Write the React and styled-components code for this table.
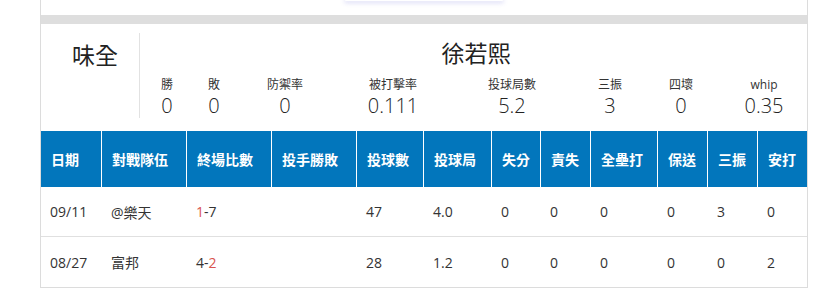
import React from "react";
import styled, { createGlobalStyle } from "styled-components";

const Global = createGlobalStyle`
  html, body { margin: 0; padding: 0; background: #fff; }
  body { font-family: "Open Sans", "Noto Sans CJK TC", sans-serif; color: #333; }
`;

const Page = styled.div`
  padding-left: 40px;
`;

const Card = styled.div`
  width: 768px;
  box-sizing: border-box;
  border-left: 1px solid #dcdcdc;
  border-right: 1px solid #dcdcdc;
  border-bottom: 1px solid #dcdcdc;
  background: #fff;
`;

const TopArea = styled.div`
  height: 15px;
  display: flex;
  justify-content: center;
`;

const FloatingTab = styled.div`
  width: 158px;
  height: 1px;
  background: #fff;
  border-radius: 0 0 8px 8px;
  box-shadow: 0 1px 4px 1px rgba(120, 120, 220, 0.28);
`;

const GrayBar = styled.div`
  height: 9px;
  background: #dedede;
`;

const Header = styled.div`
  display: flex;
  padding: 9px 0 13px;
`;

const TeamBox = styled.div`
  flex: 0 0 99px;
  height: 85px;
  box-sizing: border-box;
  border-right: 1px solid #e2e2e2;
  padding: 6px 0 0 31px;
  font-family: "Noto Sans CJK TC", sans-serif;
  font-size: 23px;
  line-height: 30px;
  color: #222;
`;

const PlayerBox = styled.div`
  flex: 1;
  min-width: 0;
  display: flex;
  flex-direction: column;
`;

const PlayerName = styled.div`
  margin-top: 4px;
  padding-left: 5px;
  text-align: center;
  font-family: "Noto Sans CJK TC", sans-serif;
  font-size: 23px;
  line-height: 30px;
  color: #222;
`;

const StatGrid = styled.div`
  display: grid;
  grid-template-columns: 54px 40px 102px 114px 124px 72px 70px 96px;
  margin-top: 10px;
`;

const Stat = styled.div`
  display: flex;
  flex-direction: column;
  align-items: center;
  white-space: nowrap;
`;

const StatLabel = styled.div`
  font-family: "Open Sans", "Noto Sans CJK TC", sans-serif;
  font-size: 12px;
  line-height: 16px;
  color: #333;
`;

const StatValue = styled.div`
  font-family: "Open Sans", sans-serif;
  font-weight: 300;
  font-size: 20px;
  line-height: 24px;
  margin-top: 1px;
  color: #222;
`;

const Table = styled.table`
  width: 766px;
  table-layout: fixed;
  border-collapse: separate;
  border-spacing: 0;
`;

const Th = styled.th`
  height: 56px;
  box-sizing: border-box;
  background: #0276bc;
  color: #fff;
  font-family: "Noto Sans CJK TC", sans-serif;
  font-weight: 700;
  font-size: 14px;
  text-align: left;
  padding: 0 0 0 10px;
  border-left: ${(p) => (p.$first ? "none" : "1px solid #fff")};
`;

const Td = styled.td`
  height: 50px;
  box-sizing: border-box;
  font-size: 14px;
  color: #333;
  padding: 0 0 0 ${(p) => (p.$first ? 9 : 10)}px;
  border-bottom: ${(p) => (p.$last ? "none" : "1px solid #e0e0e0")};
  font-family: "Open Sans", "Noto Sans CJK TC", sans-serif;
  white-space: nowrap;
`;

const Red = styled.span`
  color: #d9534f;
`;

const colWidths = [60, 85, 85, 85, 67, 68, 49, 50, 67, 50, 50, 50];
const heads = ["日期", "對戰隊伍", "終場比數", "投手勝敗", "投球數", "投球局", "失分", "責失", "全壘打", "保送", "三振", "安打"];

const stats = [
  ["勝", "0"],
  ["敗", "0"],
  ["防禦率", "0"],
  ["被打擊率", "0.111"],
  ["投球局數", "5.2"],
  ["三振", "3"],
  ["四壞", "0"],
  ["whip", "0.35"],
];

const rows = [
  ["09/11", "@樂天", <><Red>1</Red>-7</>, "", "47", "4.0", "0", "0", "0", "0", "3", "0"],
  ["08/27", "富邦", <>4-<Red>2</Red></>, "", "28", "1.2", "0", "0", "0", "0", "0", "2"],
];

export default function App() {
  return (
    <Page>
      <Global />
      <Card>
        <TopArea>
          <FloatingTab />
        </TopArea>
        <GrayBar />
        <Header>
          <TeamBox>味全</TeamBox>
          <PlayerBox>
            <PlayerName>徐若熙</PlayerName>
            <StatGrid>
              {stats.map(([l, v]) => (
                <Stat key={l}>
                  <StatLabel>{l}</StatLabel>
                  <StatValue>{v}</StatValue>
                </Stat>
              ))}
            </StatGrid>
          </PlayerBox>
        </Header>
        <Table>
          <colgroup>
            {colWidths.map((w, i) => (
              <col key={i} style={{ width: w }} />
            ))}
          </colgroup>
          <thead>
            <tr>
              {heads.map((h, i) => (
                <Th key={h + i} $first={i === 0}>{h}</Th>
              ))}
            </tr>
          </thead>
          <tbody>
            {rows.map((r, ri) => (
              <tr key={ri}>
                {r.map((c, ci) => (
                  <Td key={ci} $first={ci === 0} $last={ri === rows.length - 1}>{c}</Td>
                ))}
              </tr>
            ))}
          </tbody>
        </Table>
      </Card>
    </Page>
  );
}
